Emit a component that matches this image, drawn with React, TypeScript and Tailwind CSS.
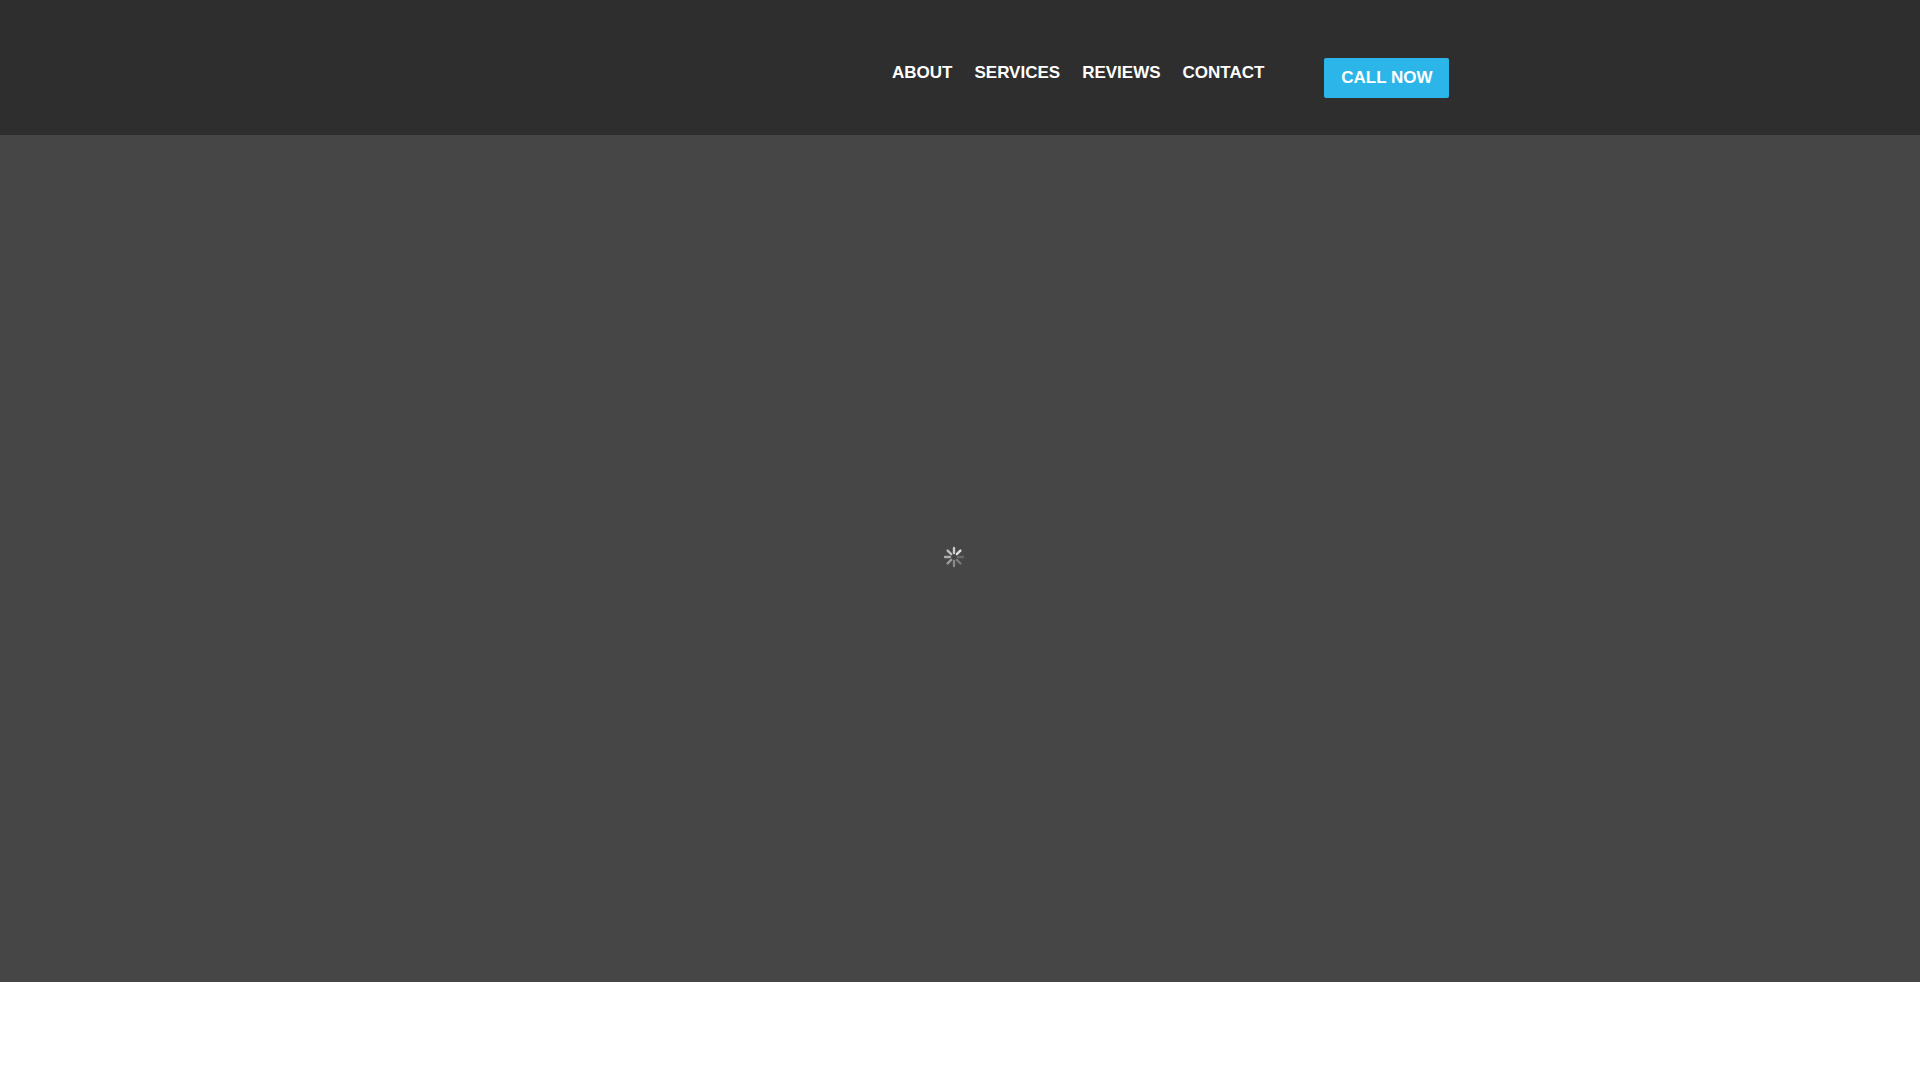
export default function App() {
  const spokes = Array.from({ length: 8 });
  return (
    <div className="min-h-[1300px] bg-white" style={{ fontFamily: '"Liberation Sans", Arial, sans-serif' }}>
      <header className="h-[135px] bg-[#2e2e2e] flex items-start">
        <nav className="ml-[892px] mt-[64px] flex gap-[22px] text-white font-bold text-[17px] leading-none">
          <a>ABOUT</a>
          <a>SERVICES</a>
          <a>REVIEWS</a>
          <a>CONTACT</a>
        </nav>
        <button className="ml-[60px] mt-[58px] w-[125px] h-[40px] bg-[#2cb5e8] text-white font-bold text-[17px] rounded-[2px]">
          CALL NOW
        </button>
      </header>
      <section className="h-[847px] bg-[#464646] flex items-center justify-center">
        <svg width="24" height="24" viewBox="0 0 24 24" className="ml-[-12px] mt-[-4px]">
          {spokes.map((_, i) => (
            <line
              key={i}
              x1="12" y1="3" x2="12" y2="8"
              stroke="#ddd"
              strokeWidth="2.4"
              strokeLinecap="round"
              opacity={1 - i * 0.11}
              transform={`rotate(${i * -45 + 45} 12 12)`}
            />
          ))}
        </svg>
      </section>
    </div>
  );
}
